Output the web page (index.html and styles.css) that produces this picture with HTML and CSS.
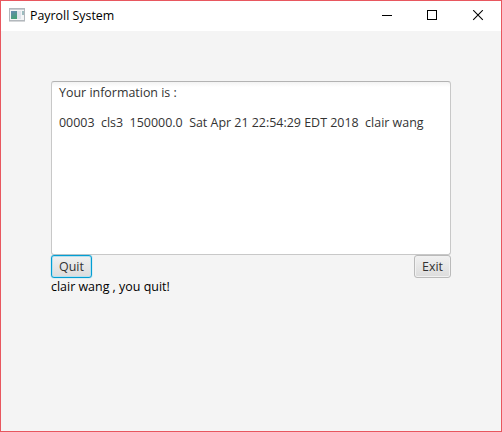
FILE: index.html
```html
<!DOCTYPE html>
<html lang="en">
<head>
<meta charset="utf-8">
<title>Payroll System</title>
<link rel="stylesheet" href="styles.css">
</head>
<body>
<div class="window">
  <header class="titlebar">
    <svg class="app-icon" width="16" height="14" viewBox="0 0 16 14">
      <defs><linearGradient id="pane" x1="0" y1="0" x2="0.4" y2="1"><stop offset="0" stop-color="#6689b5"/><stop offset="1" stop-color="#45a078"/></linearGradient></defs>
      <rect x="0.5" y="0.5" width="15" height="12" fill="#f4f5f6" stroke="#b3b8bd"/>
      <path d="M1 1.5H15" stroke="#c9cdd1"/>
      <rect x="2" y="3" width="6" height="8" fill="url(#pane)"/>
      <rect x="8" y="3" width="4" height="8" fill="#dfe4ec"/>
      <rect x="13" y="3" width="2" height="4" fill="#9dbcbf"/>
      <path d="M0 13.5H16" stroke="#d5d7d9"/>
    </svg>
    <h1 class="title">Payroll System</h1>
    <svg class="controls" width="104" height="12" viewBox="0 0 104 12" fill="none" stroke="#000">
      <path d="M0 5.5H10"/>
      <rect x="45.5" y="0.5" width="9" height="9"/>
      <path d="M91.2 0.2L100.8 9.8M100.8 0.2L91.2 9.8" stroke-width="1.1"/>
    </svg>
  </header>
  <main class="content">
    <div class="textarea">
      <p class="heading">Your information is :</p>
      <p class="record">00003  cls3  150000.0  Sat Apr 21 22:54:29 EDT 2018  clair wang</p>
    </div>
    <div class="actions">
      <button class="button focused">Quit</button>
      <button class="button">Exit</button>
    </div>
    <p class="status">clair wang , you quit!</p>
  </main>
</div>
</body>
</html>
```
FILE: styles.css
```css
* { box-sizing: border-box; }
body {
  margin: 0;
  font-family: "Open Sans", "Noto Sans", sans-serif;
  font-size: 12.45px;
  color: #333;
}
p, h1 { margin: 0; white-space: pre; }
.window {
  width: 502px;
  height: 432px;
  border: 1px solid #e8575f;
  background: #f4f4f4;
}
.titlebar {
  display: flex;
  height: 30px;
  padding: 0 15px 0 8px;
  background: #fff;
}
.app-icon { margin-top: 7px; }
.title {
  margin-left: 5px;
  font-size: 12.4px;
  font-weight: 400;
  line-height: 29px;
  color: #000;
}
.controls { margin: 9px 0 0 auto; }
.content { padding: 50px 50px 0; }
.textarea {
  height: 174px;
  padding: 3px 7px;
  border: 1px solid #c8c8c8;
  border-top-color: #b3b3b3;
  border-radius: 3px;
  background: linear-gradient(#f3f3f3, #fff 5px);
  line-height: 15px;
}
.record { margin-top: 15px; }
.actions { display: flex; justify-content: space-between; }
.button {
  width: 37px;
  height: 23px;
  padding: 0;
  border: 1px solid #bababa;
  border-radius: 3px;
  background: linear-gradient(#f1f1f1, #dcdcdc);
  box-shadow: inset 0 0 0 1px #f1f1f1;
  font: inherit;
  line-height: 20px;
  color: #333;
}
.focused {
  width: 41px;
  border-color: #039ed3;
  box-shadow: 0 0 1px #039ed3, inset 0 0 0 1px #b5e0ef;
}
.status { line-height: 17px; color: #000; }
```
